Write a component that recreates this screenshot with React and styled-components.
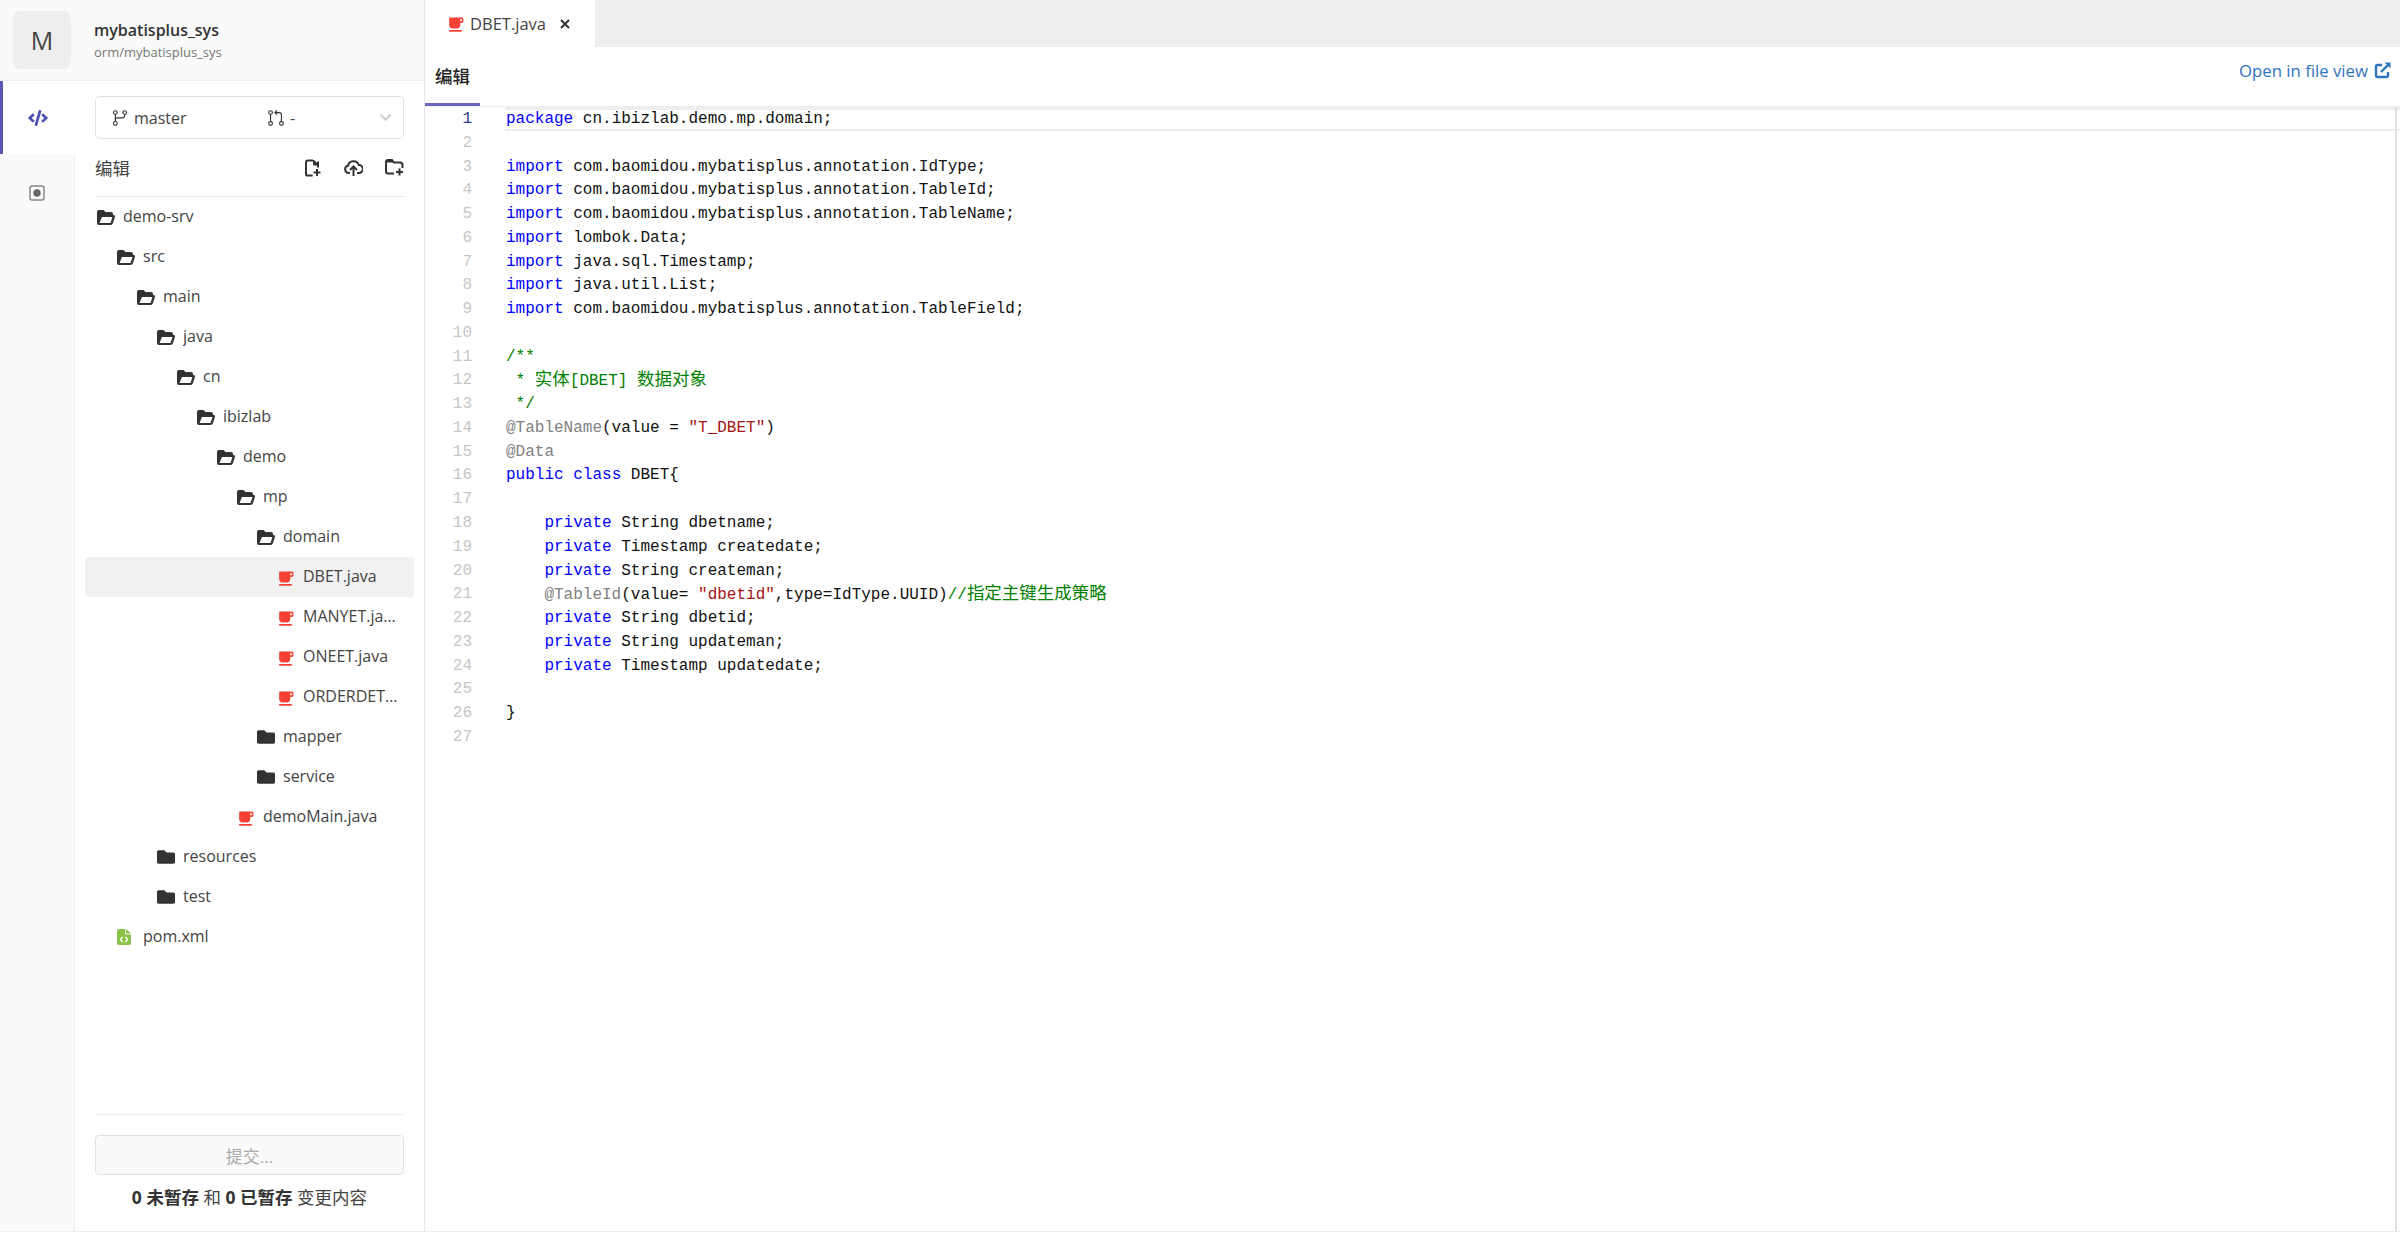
import React from 'react'
import styled, { createGlobalStyle } from 'styled-components'
import { FaCode, FaFolder, FaChevronDown } from 'react-icons/fa'
import { MdLocalCafe } from 'react-icons/md'
import { GoGitBranch, GoGitPullRequest } from 'react-icons/go'

const UI_FONT = `"Open Sans", "Noto Sans CJK SC", sans-serif`

const GlobalStyle = createGlobalStyle`
  html, body { margin: 0; padding: 0; background: #fff; }
  body { font-family: ${UI_FONT}; color: #333; }
  * { box-sizing: border-box; }
`

const Shell = styled.div`
  display: grid;
  grid-template-columns: 425px 1fr;
  height: 1232px;
  border-bottom: 1px solid #ececec;
  overflow: hidden;
`

const Sidebar = styled.aside`
  display: flex;
  flex-direction: column;
  border-right: 1px solid #e8e8e8;
  min-height: 0;
`

const RepoHeader = styled.header`
  display: flex;
  align-items: center;
  height: 81px;
  padding-left: 13px;
  background: #fafafa;
  border-bottom: 1px solid #eee;
`

const Avatar = styled.div`
  width: 58px;
  height: 58px;
  border-radius: 8px;
  background: #eee;
  display: flex;
  align-items: center;
  justify-content: center;
  font-size: 25px;
  color: #444;
  margin-right: 23px;
`

const RepoName = styled.div`
  font-size: 16px;
  font-weight: 600;
  line-height: 24px;
  color: #333;
`

const RepoPath = styled.div`
  font-size: 13px;
  line-height: 20px;
  color: #777;
`

const SideBody = styled.div`
  flex: 1;
  display: flex;
  min-height: 0;
`

const Rail = styled.nav`
  width: 75px;
  display: flex;
  flex-direction: column;
  background: #fafafa;
  border-right: 1px solid #eee;
`

const RailItem = styled.div`
  height: ${props => props.active ? 73 : 78}px;
  display: flex;
  align-items: center;
  justify-content: center;
  font-size: 20px;
  color: ${props => props.active ? '#4b4fb0' : '#777'};
  background: ${props => props.active ? '#fff' : 'transparent'};
  box-shadow: ${props => props.active ? 'inset 3px 0 0 #5b55b8' : 'none'};
  margin-right: ${props => props.active ? '-1px' : '0'};
`

const Panel = styled.div`
  flex: 1;
  min-width: 0;
  display: flex;
  flex-direction: column;
  padding: 15px 20px 0 20px;
`

const BranchSelect = styled.div`
  height: 43px;
  display: flex;
  align-items: center;
  padding: 0 11px 0 15px;
  border: 1px solid #e2e2e2;
  border-radius: 4px;
  font-size: 16px;
  color: #444;
`

const BranchName = styled.span`
  display: flex;
  align-items: center;
  gap: 5px;
  width: 156px;
`

const PullName = styled.span`
  flex: 1;
  display: flex;
  align-items: center;
  gap: 5px;
`

const PanelHead = styled.div`
  height: 58px;
  display: flex;
  align-items: center;
  justify-content: space-between;
  border-bottom: 1px solid #e8e8e8;
  font-size: 17.5px;
  color: #444;
`

const HeadTools = styled.div`
  display: flex;
  align-items: center;
  gap: 22px;
`

const Tree = styled.div`
  flex: 1;
  margin: 0 -10px;
`

const Row = styled.div`
  height: 40px;
  display: flex;
  align-items: center;
  padding-left: ${props => 12 + props.level * 20}px;
  background: ${props => props.selected ? '#f1f1f1' : 'transparent'};
  border-radius: 4px;
  font-size: 16px;
  color: #444;
`

const RowIcon = styled.span`
  width: 26px;
  flex: none;
  display: flex;
  align-items: center;
  font-size: 18px;
  color: #333;
`

const CupIcon = styled(RowIcon)`
  width: ${props => props.wide || 27}px;
  margin-left: ${props => props.wide ? 0 : -1}px;
  padding-top: 2px;
  font-size: 19px;
  color: #f44336;
`

const RowLabel = styled.span`
  max-width: ${props => props.max || 300}px;
  padding-bottom: 2px;
  white-space: nowrap;
  overflow: hidden;
  text-overflow: ellipsis;
`

const CommitBox = styled.div`
  border-top: 1px solid #eee;
  padding-top: 20px;
  height: 117px;
  flex: none;
`

const CommitButton = styled.div`
  height: 40px;
  display: flex;
  align-items: center;
  justify-content: center;
  background: #fafafa;
  border: 1px solid #e2e2e2;
  border-radius: 4px;
  color: #aaa;
  font-size: 17px;
`

const Summary = styled.div`
  text-align: center;
  margin-top: 11px;
  font-size: 17.5px;
  line-height: 22px;
  white-space: nowrap;
  color: #444;
  b { font-weight: 700; color: #333; }
`

const Main = styled.main`
  display: flex;
  flex-direction: column;
  min-width: 0;
`

const TabStrip = styled.div`
  height: 47px;
  flex: none;
  display: flex;
  background: #eee;
`

const FileTab = styled.div`
  width: 170px;
  display: flex;
  align-items: center;
  padding-left: 21px;
  background: #fff;
  font-size: 16.5px;
  color: #444;
`

const TabClose = styled.span`
  display: flex;
  margin-left: 14px;
`

const ModeBar = styled.div`
  height: 59px;
  flex: none;
  display: flex;
  justify-content: space-between;
`

const ModeTab = styled.div`
  width: 55px;
  display: flex;
  align-items: center;
  justify-content: center;
  font-size: 17.5px;
  font-weight: 500;
  color: #222;
  border-bottom: 3px solid #6a66c2;
`

const OpenLink = styled.a`
  display: flex;
  align-items: center;
  gap: 6px;
  height: 46px;
  padding-right: 8px;
  font-size: 16.75px;
  color: #2f75bd;
`

const Editor = styled.div`
  flex: 1;
  position: relative;
  border-top: 1px solid #eee;
  font-family: "Liberation Mono", "Noto Sans CJK SC", monospace;
  font-size: 16px;
  line-height: 25.77px;
  white-space: pre;
`

const CodeLine = styled.div`
  display: flex;
  height: 23.77px;
`

const LineNo = styled.span`
  width: 80px;
  flex: none;
  padding-right: 33px;
  text-align: right;
  color: ${props => props.active ? '#26398c' : '#c6c6c6'};
`

const LineText = styled.span`
  flex: 1;
  padding-left: 1px;
  color: #111;
  box-shadow: ${props => props.active ? 'inset 0 3px 0 #eee, inset 0 -2px 0 #eee' : 'none'};
`

const Kw = styled.span` color: #0000ff; `
const Str = styled.span` color: #a31515; `
const Com = styled.span` color: #008000; `
const Ann = styled.span` color: #808080; `
const Han = styled.span` font-size: 17.5px; `

const ScrollEdge = styled.div`
  position: absolute;
  top: 0;
  bottom: 0;
  right: 3px;
  width: 2px;
  background: #e0e0e0;
`

const CloseIcon = () => (
  <svg width="10" height="10" viewBox="0 0 10 10" fill="none" stroke="#333" strokeWidth="2">
    <path d="M1 1l8 8M9 1l-8 8" />
  </svg>
)

const FilePlusIcon = () => (
  <svg width="18" height="18" viewBox="0 0 18 18" fill="none">
    <path d="M9 1.500H3.600A1.600 1.600 0 0 0 2 3.100v11.800a1.600 1.600 0 0 0 1.600 1.600h5" stroke="#333" strokeWidth="2" />
    <path d="M9 1v4.600a1 1 0 0 0 1 1h5v-.8L10 1z" fill="#333" />
    <path d="M14 2.500v6" stroke="#333" strokeWidth="2" />
    <path d="M13 10v7M9.500 13.500h7" stroke="#333" strokeWidth="2" />
  </svg>
)

const UploadIcon = () => (
  <svg width="19" height="18" viewBox="0 0 19 18" fill="none" stroke="#333" strokeWidth="2">
    <path d="M6 14H4.700A3.700 3.700 0 0 1 4 6.700 5.600 5.600 0 0 1 14.800 6a4 4 0 0 1 .2 8h-2" />
    <path d="M9.500 17V8M6 11l3.500-3.500L13 11" />
  </svg>
)

const FolderPlusIcon = () => (
  <svg width="19" height="17" viewBox="0 0 19 17" fill="none">
    <path d="M9 14.500H3a2 2 0 0 1-2-2V3a2 2 0 0 1 2-2h4l2 2.500h6a2.500 2.500 0 0 1 2.500 2.500V9" stroke="#333" strokeWidth="2" />
    <path d="M1 3.500h7.500l-1-2H3z" fill="#333" />
    <path d="M14.500 9.500v7M11 13h7" stroke="#333" strokeWidth="2" />
  </svg>
)

const RecordIcon = () => (
  <svg width="16" height="16" viewBox="0 0 16 16" fill="none">
    <rect x="1" y="1" width="14" height="14" rx="2" stroke="#888" strokeWidth="1.500" />
    <circle cx="8" cy="8" r="3.700" fill="#666" />
  </svg>
)

const ExternalIcon = () => (
  <svg width="18" height="18" viewBox="0 0 18 18" fill="none" stroke="#2f75bd" strokeWidth="2.400">
    <path d="M8 4H3.500A1.500 1.500 0 0 0 2 5.500v9A1.500 1.500 0 0 0 3.500 16h9a1.500 1.500 0 0 0 1.500-1.500V11" />
    <path d="M7 11l8-8" />
    <path d="M10.500 1.500H16.500V7.500z" fill="#2f75bd" stroke="none" />
  </svg>
)

const FolderOpenIcon = () => (
  <svg width="18" height="15" viewBox="0 0 18 15">
    <path
      fillRule="evenodd"
      fill="#333"
      d="M2 0H6.500L8.500 2H14A2 2 0 0 1 16 4V5H16.500A1.500 1.500 0 0 1 17.900 7L16 13A2.800 2.800 0 0 1 13.500 15H2A2 2 0 0 1 0 13V2A2 2 0 0 1 2 0ZM5 7L2.500 13H13.500L15.500 7Z"
    />
  </svg>
)

const XmlFileIcon = () => (
  <svg width="14" height="16" viewBox="0 0 14 16" fill="none">
    <path fill="#8bc34a" d="M2 0H8V4.500A1 1 0 0 0 9 5.500H14V14A2 2 0 0 1 12 16H2A2 2 0 0 1 0 14V2A2 2 0 0 1 2 0Z" />
    <path fill="#8bc34a" d="M9 0L14 4.500H9Z" />
    <path stroke="#fff" strokeWidth="1.300" d="M5.500 8L3.500 10.500L5.500 13M8.500 8L10.500 10.500L8.500 13" />
  </svg>
)

const tree = [
  { name: 'demo-srv', level: 0, kind: 'open' },
  { name: 'src', level: 1, kind: 'open' },
  { name: 'main', level: 2, kind: 'open' },
  { name: 'java', level: 3, kind: 'open' },
  { name: 'cn', level: 4, kind: 'open' },
  { name: 'ibizlab', level: 5, kind: 'open' },
  { name: 'demo', level: 6, kind: 'open' },
  { name: 'mp', level: 7, kind: 'open' },
  { name: 'domain', level: 8, kind: 'open' },
  { name: 'DBET.java', level: 9, kind: 'java', selected: true },
  { name: 'MANYET.java', level: 9, kind: 'java' },
  { name: 'ONEET.java', level: 9, kind: 'java' },
  { name: 'ORDERDETAIL.java', level: 9, kind: 'java' },
  { name: 'mapper', level: 8, kind: 'folder' },
  { name: 'service', level: 8, kind: 'folder' },
  { name: 'demoMain.java', level: 7, kind: 'java' },
  { name: 'resources', level: 3, kind: 'folder' },
  { name: 'test', level: 3, kind: 'folder' },
  { name: 'pom.xml', level: 1, kind: 'xml' },
]

function TreeIcon({ kind }) {
  if (kind === 'open') return <RowIcon><FolderOpenIcon /></RowIcon>
  if (kind === 'folder') return <RowIcon><FaFolder /></RowIcon>
  if (kind === 'java') return <CupIcon><MdLocalCafe /></CupIcon>
  return <RowIcon><XmlFileIcon /></RowIcon>
}

const code = [
  <><Kw>package</Kw> cn.ibizlab.demo.mp.domain;</>,
  '',
  <><Kw>import</Kw> com.baomidou.mybatisplus.annotation.IdType;</>,
  <><Kw>import</Kw> com.baomidou.mybatisplus.annotation.TableId;</>,
  <><Kw>import</Kw> com.baomidou.mybatisplus.annotation.TableName;</>,
  <><Kw>import</Kw> lombok.Data;</>,
  <><Kw>import</Kw> java.sql.Timestamp;</>,
  <><Kw>import</Kw> java.util.List;</>,
  <><Kw>import</Kw> com.baomidou.mybatisplus.annotation.TableField;</>,
  '',
  <Com>/**</Com>,
  <Com> * <Han>实体</Han>[DBET] <Han>数据对象</Han></Com>,
  <Com> */</Com>,
  <><Ann>@TableName</Ann>(value = <Str>"T_DBET"</Str>)</>,
  <Ann>@Data</Ann>,
  <><Kw>public</Kw> <Kw>class</Kw> DBET{'{'}</>,
  '',
  <>    <Kw>private</Kw> String dbetname;</>,
  <>    <Kw>private</Kw> Timestamp createdate;</>,
  <>    <Kw>private</Kw> String createman;</>,
  <>    <Ann>@TableId</Ann>(value= <Str>"dbetid"</Str>,type=IdType.UUID)<Com>//<Han>指定主键生成策略</Han></Com></>,
  <>    <Kw>private</Kw> String dbetid;</>,
  <>    <Kw>private</Kw> String updateman;</>,
  <>    <Kw>private</Kw> Timestamp updatedate;</>,
  '',
  '}',
  '',
]

export default function App() {
  return (
    <Shell>
      <GlobalStyle />
      <Sidebar>
        <RepoHeader>
          <Avatar>M</Avatar>
          <div>
            <RepoName>mybatisplus_sys</RepoName>
            <RepoPath>orm/mybatisplus_sys</RepoPath>
          </div>
        </RepoHeader>
        <SideBody>
          <Rail>
            <RailItem active><FaCode /></RailItem>
            <RailItem><RecordIcon /></RailItem>
          </Rail>
          <Panel>
            <BranchSelect>
              <BranchName><GoGitBranch size={18} color="#333" />master</BranchName>
              <PullName><GoGitPullRequest size={18} color="#333" />-</PullName>
              <FaChevronDown size={13} color="#ccc" />
            </BranchSelect>
            <PanelHead>
              编辑
              <HeadTools>
                <FilePlusIcon />
                <UploadIcon />
                <FolderPlusIcon />
              </HeadTools>
            </PanelHead>
            <Tree>
              {tree.map(item => (
                <Row key={item.name} level={item.level} selected={item.selected}>
                  <TreeIcon kind={item.kind} />
                  <RowLabel max={item.level === 9 ? 96 : 300}>{item.name}</RowLabel>
                </Row>
              ))}
            </Tree>
            <CommitBox>
              <CommitButton>提交...</CommitButton>
              <Summary><b>0 未暂存</b> 和 <b>0 已暂存</b> 变更内容</Summary>
            </CommitBox>
          </Panel>
        </SideBody>
      </Sidebar>
      <Main>
        <TabStrip>
          <FileTab>
            <CupIcon wide={24}><MdLocalCafe /></CupIcon>
            DBET.java
            <TabClose><CloseIcon /></TabClose>
          </FileTab>
        </TabStrip>
        <ModeBar>
          <ModeTab>编辑</ModeTab>
          <OpenLink>Open in file view <ExternalIcon /></OpenLink>
        </ModeBar>
        <Editor>
          {code.map((line, i) => (
            <CodeLine key={i}>
              <LineNo active={i === 0}>{i + 1}</LineNo>
              <LineText active={i === 0}>{line}</LineText>
            </CodeLine>
          ))}
          <ScrollEdge />
        </Editor>
      </Main>
    </Shell>
  )
}
